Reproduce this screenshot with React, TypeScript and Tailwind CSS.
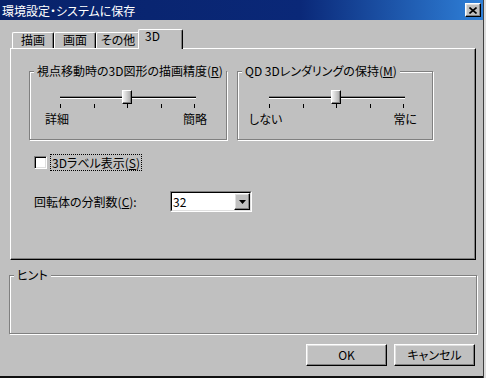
import type { ReactNode } from 'react'

const raised =
  'border border-t-white border-l-white border-r-black border-b-black shadow-[inset_-1px_-1px_0_#808080,inset_1px_1px_0_#dfdfdf]'

function Group({ title, className, children }: { title: ReactNode; className: string; children?: ReactNode }) {
  return (
    <fieldset className={`border border-[#808080] shadow-[inset_1px_1px_0_#fff,1px_1px_0_#fff] ${className}`}>
      <legend className="ml-[4px] px-[3px] leading-[12px] bg-[#c0c0c0]">{title}</legend>
      {children}
    </fieldset>
  )
}

function Slider({
  trackClass,
  labelsClass,
  left,
  right,
}: {
  trackClass: string
  labelsClass: string
  left: string
  right: string
}) {
  const ticks = [0, 34, 67, 101, 134]
  return (
    <div className="flex flex-col">
      <div className={`relative mt-[13px] h-[18px] w-[136px] ${trackClass}`}>
        <div className="absolute left-0 right-0 top-[6px] h-[3px] border-t border-b border-t-[#808080] border-b-white bg-black" />
        {ticks.map((t) => (
          <div key={t} className="absolute top-[14px] h-[4px] w-[1px] bg-black" style={{ left: t }} />
        ))}
        <div className="absolute left-[62px] top-0 h-[14px] w-[10px] border border-t-white border-l-white border-r-black border-b-black bg-gradient-to-r from-[#f4f4f4] to-[#a8a8a8] shadow-[inset_-1px_-1px_0_#808080]" />
      </div>
      <div className={`mt-[4px] flex justify-between leading-[14px] ${labelsClass}`}>
        <span>{left}</span>
        <span>{right}</span>
      </div>
    </div>
  )
}

function Tab({ label, width }: { label: string; width: string }) {
  return (
    <div
      className={`h-[16px] ${width} flex justify-center rounded-t-[2px] border-t border-l border-r border-t-white border-l-white border-r-black shadow-[inset_-1px_0_0_#808080] leading-[14px]`}
    >
      {label}
    </div>
  )
}

export default function App() {
  return (
    <div className="flex h-[378px] w-[486px] overflow-hidden bg-[#c0c0c0] font-['Noto_Sans_CJK_JP','Noto_Sans_CJK_SC',sans-serif] text-[12px] text-black [font-feature-settings:'palt']">
      <div className="flex w-[483px] flex-col">
        {/* title bar */}
        <div className="flex h-[20px] items-center bg-[linear-gradient(to_right,#08226a_0%,#0a2878_62%,#2f80d8_100%)] pl-[2px] pr-[2px]">
          <span className="pt-[1px] leading-[14px] text-white">環境設定・システムに保存</span>
          <button className={`ml-auto flex h-[14px] w-[16px] items-center justify-center bg-[#c0c0c0] ${raised}`}>
            <svg width="8" height="7" viewBox="0 0 8 7">
              <path d="M0.5 0.5 L7.5 6.5 M7.5 0.5 L0.5 6.5" stroke="black" strokeWidth="1.6" />
            </svg>
          </button>
        </div>

        <div className="flex flex-1 flex-col pl-[10px] pr-[7px] pt-[9px]">
          {/* tabs */}
          <div className="flex h-[19px] items-end pl-[2px]">
            <Tab label="描画" width="w-[42px]" />
            <Tab label="画面" width="w-[42px]" />
            <Tab label="その他" width="w-[44px]" />
            <div className="relative z-10 -mb-[1px] ml-[-2px] flex h-[20px] w-[45px] rounded-t-[2px] border-t border-l border-r border-t-white border-l-white border-r-black bg-[#c0c0c0] pl-[6px] leading-[12px] shadow-[inset_-1px_0_0_#808080]">
              3D
            </div>
          </div>

          {/* panel */}
          <div className="flex h-[212px] flex-col border border-t-white border-l-white border-r-black border-b-black pl-[18px] pt-[16px] shadow-[inset_-1px_-1px_0_#808080]">
            <div className="flex gap-[10px]">
              <Group
                className="w-[198px] pb-[13px]"
                title={
                  <>
                    視点移動時の3D図形の描画精度(<u>R</u>)
                  </>
                }
              >
                <Slider trackClass="ml-[30px]" labelsClass="ml-[15px] w-[162px]" left="詳細" right="簡略" />
              </Group>
              <Group
                className="w-[196px] pb-[13px]"
                title={
                  <>
                    QD 3Dレンダリングの保持(<u>M</u>)
                  </>
                }
              >
                <Slider trackClass="ml-[31px]" labelsClass="ml-[11px] w-[168px]" left="しない" right="常に" />
              </Group>
            </div>

            <div className="mt-[14px] flex h-[17px] items-center pl-[5px]">
              <div className="h-[13px] w-[13px] shrink-0 border border-t-[#808080] border-l-[#808080] border-r-white border-b-white bg-white shadow-[inset_1px_1px_0_#000,inset_-1px_-1px_0_#dfdfdf]" />
              <span className="ml-[3px] h-[17px] whitespace-nowrap border border-dotted border-black px-[1px] leading-[15px]">
                3Dラベル表示(<u>S</u>)
              </span>
            </div>

            <div className="mt-[20px] flex h-[21px] items-center pl-[5px]">
              <span className="w-[136px] whitespace-nowrap leading-[14px]">
                回転体の分割数(<u>C</u>):
              </span>
              <div className="h-[21px] w-[82px] border border-t-[#808080] border-l-[#808080] border-r-white border-b-white">
                <div className="flex h-full w-full items-center border border-t-black border-l-black border-r-[#dfdfdf] border-b-[#dfdfdf] bg-white">
                  <span className="flex-1 pl-[1px] leading-[14px]">32</span>
                  <div className={`flex h-[17px] w-[16px] items-center justify-center bg-[#c0c0c0] ${raised}`}>
                    <svg width="7" height="4" viewBox="0 0 7 4">
                      <path d="M0 0 H7 L3.5 4 Z" fill="black" />
                    </svg>
                  </div>
                </div>
              </div>
            </div>
          </div>

          {/* hint */}
          <Group className="ml-[-1px] mt-[9px] h-[65px] w-[468px]" title="ヒント" />

          {/* buttons */}
          <div className="mr-[1px] mt-[10px] flex justify-end gap-[7px]">
            <button className={`h-[22px] w-[81px] bg-[#c0c0c0] leading-[14px] ${raised}`}>OK</button>
            <button className={`h-[22px] w-[81px] bg-[#c0c0c0] leading-[14px] ${raised}`}>キャンセル</button>
          </div>

          <div className="mt-auto h-[2px] -ml-[10px] -mr-[7px] bg-[#101010]" />
        </div>
      </div>
      <div className="w-[1px] bg-[#404040]" />
      <div className="w-[2px] bg-[#dcdcdc]" />
    </div>
  )
}
